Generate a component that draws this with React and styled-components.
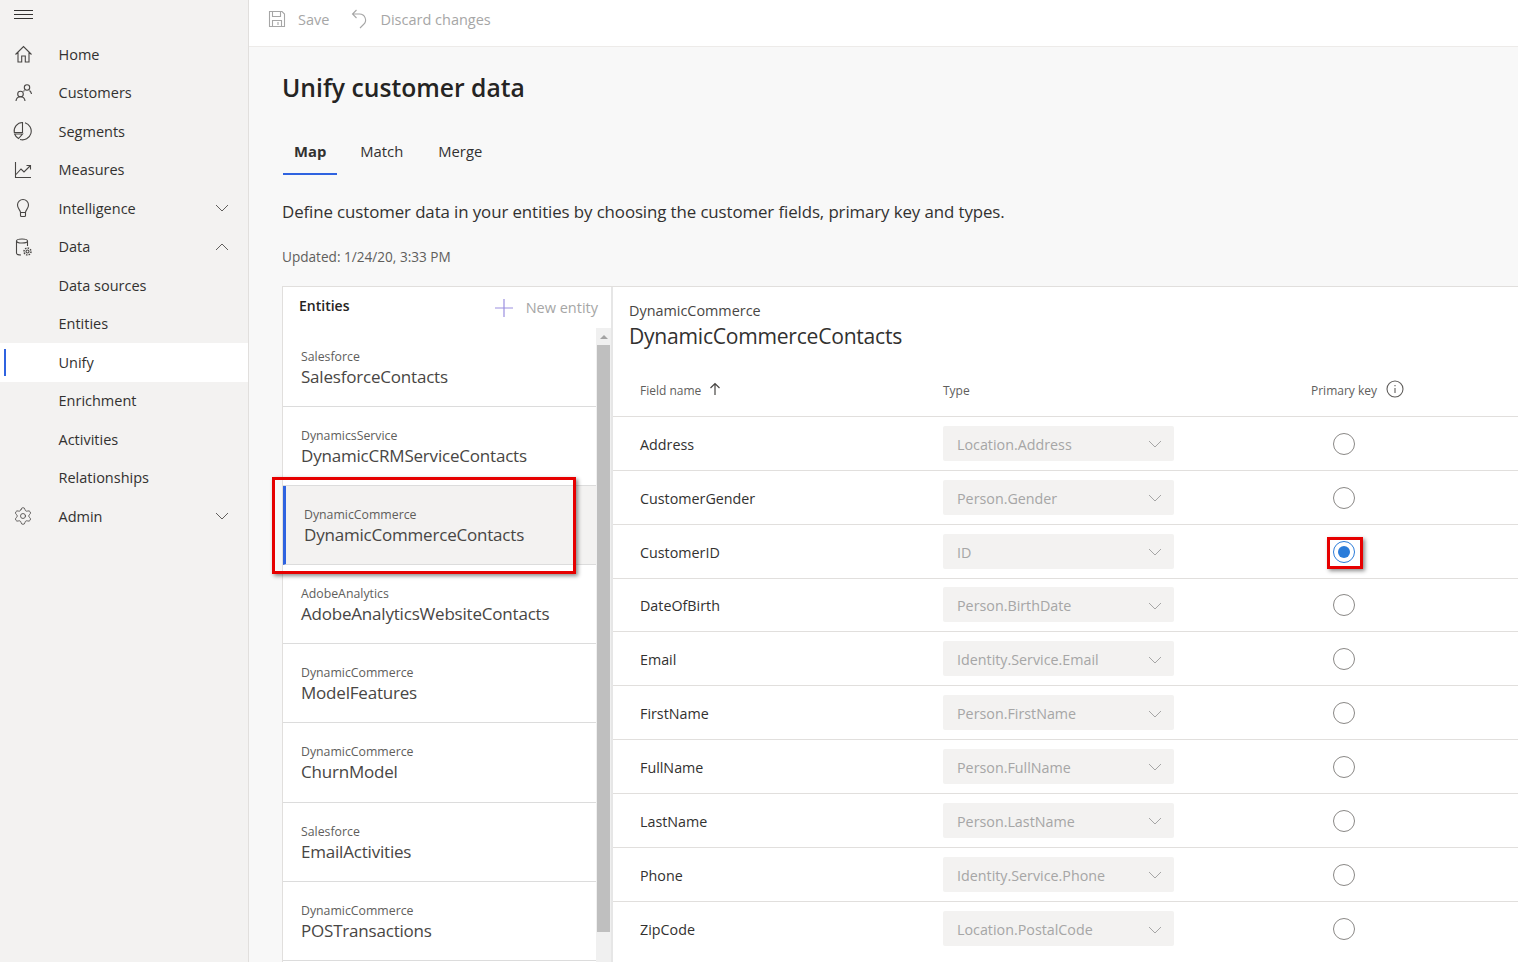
import React from "react";
import styled, { createGlobalStyle } from "styled-components";
import { Settings } from "lucide-react";

const GlobalStyle = createGlobalStyle`
  html, body {
    margin: 0;
    height: 100%;
    overflow: hidden;
    font-family: "Open Sans", "Noto Sans", sans-serif;
    color: #323130;
    background: #f8f8f8;
  }
  * { box-sizing: border-box; }
`;

const Page = styled.div`
  display: flex;
  width: 1518px;
  height: 962px;
  overflow: hidden;
`;

const Sidebar = styled.nav`
  width: 249px;
  flex: none;
  background: #f3f2f1;
  border-right: 1px solid #e1dfdd;
`;

const Burger = styled.div`
  height: 35px;
  display: flex;
  align-items: flex-start;
  padding: 9px 0 0 14px;
  color: #323130;
`;

const NavRow = styled.div`
  position: relative;
  height: 38.5px;
  display: flex;
  align-items: center;
  font-size: 14.5px;
  background: ${(p) => (p.$active ? "#fff" : "transparent")};
  &::before {
    content: "";
    display: ${(p) => (p.$active ? "block" : "none")};
    position: absolute;
    left: 4px;
    top: 6px;
    bottom: 6px;
    width: 2px;
    background: #2f63e0;
  }
`;

const NavIcon = styled.span`
  width: 58.5px;
  flex: none;
  padding-left: 13px;
  display: flex;
  align-items: center;
  color: #484644;
`;

const NavLabel = styled.span`
  flex: 1;
`;

const NavChevron = styled.span`
  width: 33px;
  flex: none;
  display: flex;
  color: #605e5c;
`;

const Main = styled.main`
  flex: 1;
  min-width: 0;
`;

const Toolbar = styled.div`
  height: 47px;
  background: #fff;
  border-bottom: 1px solid #edebe9;
  display: flex;
  align-items: center;
  padding: 0 0 8px 19px;
  font-size: 14.5px;
  color: #a6a6a6;
`;

const ToolButton = styled.span`
  display: flex;
  align-items: center;
  gap: 12px;
  margin-right: 21px;
`;

const Content = styled.div`
  padding: 23px 0 0 33px;
`;

const Title = styled.h1`
  margin: 0;
  font-size: 24.7px;
  line-height: 36px;
  font-weight: 600;
  color: #252423;
`;

const Tabs = styled.div`
  display: flex;
  gap: 11px;
  margin-top: 31px;
  padding-left: 1px;
`;

const Tab = styled.div`
  height: 38px;
  padding: 0 ${(p) => (p.$active ? 11 : 12)}px;
  font-size: 14.8px;
  line-height: 28px;
  font-weight: ${(p) => (p.$active ? 700 : 400)};
  border-bottom: 2px solid ${(p) => (p.$active ? "#2f63e0" : "transparent")};
`;

const Description = styled.p`
  margin: 24px 0 0;
  font-size: 16.87px;
  line-height: 25px;
  color: #323130;
  letter-spacing: -0.1px;
`;

const Updated = styled.p`
  margin: 23px 0 0;
  font-size: 13.6px;
  line-height: 20px;
  color: #605e5c;
`;

const Panel = styled.div`
  display: flex;
  margin-top: 19px;
  height: 700px;
  background: #fff;
  border-top: 1px solid #e1dfdd;
  border-left: 1px solid #e1dfdd;
`;

const EntityColumn = styled.section`
  width: 330px;
  flex: none;
  border-right: 2px solid #e6e6e6;
`;

const EntityHeader = styled.div`
  height: 41px;
  display: flex;
  justify-content: space-between;
  padding: 0 13px 0 16px;
`;

const EntityHeading = styled.span`
  font-size: 14px;
  font-weight: 600;
  line-height: 38px;
  color: #252423;
`;

const NewEntity = styled.span`
  display: flex;
  align-items: center;
  gap: 12px;
  font-size: 14.5px;
  color: #a6a6a6;
  height: 41px;
`;

const EntityBody = styled.div`
  display: flex;
`;

const EntityList = styled.div`
  width: 313px;
  flex: none;
`;

const EntityItem = styled.div`
  position: relative;
  height: 79.1px;
  padding: 21px 0 0 18px;
  border-bottom: 1px solid #dcdcdc;
  background: ${(p) => (p.$active ? "#f3f2f1" : "#fff")};
  border-left: ${(p) => (p.$active ? "3px solid #2f63e0" : "0")};
`;

const EntitySource = styled.div`
  font-size: 12.3px;
  line-height: 16px;
  color: #605e5c;
`;

const EntityName = styled.div`
  font-size: 17px;
  line-height: 24px;
  color: #484644;
  letter-spacing: -0.2px;
`;

const Highlight = styled.div`
  position: absolute;
  z-index: 2;
  border: 3px solid #e60000;
  box-shadow: 2px 2px 4px rgba(0, 0, 0, 0.45);
  pointer-events: none;
`;

const EntityHighlight = styled(Highlight)`
  left: -14px;
  top: -9px;
  width: 304px;
  height: 97px;
`;

const Scrollbar = styled.div`
  width: 15px;
  flex: none;
  background: #f0f0f0;
  padding-left: 1px;
  height: 640px;
`;

const ScrollArrow = styled.div`
  height: 17px;
  display: flex;
  justify-content: center;
  align-items: center;
  &::after {
    content: "";
    border: 4px solid transparent;
    border-top: 0;
    border-bottom: 4px solid #a3a3a3;
  }
`;

const ScrollThumb = styled.div`
  width: 13px;
  height: 587px;
  background: #bfbfbf;
`;

const Detail = styled.section`
  flex: 1;
  min-width: 0;
`;

const DetailHead = styled.div`
  padding: 14px 0 0 16px;
  height: 74px;
`;

const DetailSource = styled.div`
  font-size: 14.4px;
  line-height: 20px;
  color: #484644;
`;

const DetailName = styled.div`
  font-size: 21.1px;
  line-height: 29px;
  color: #323130;
  letter-spacing: -0.25px;
`;

const gridColumns = "303px 368px 1fr";

const HeadRow = styled.div`
  display: grid;
  grid-template-columns: ${gridColumns};
  height: 56px;
  padding: 4px 0 0 27px;
  align-items: center;
  border-bottom: 1px solid #e1dfdd;
  font-size: 12px;
  color: #605e5c;
`;

const HeadCell = styled.span`
  display: flex;
  align-items: center;
  gap: ${(p) => p.$gap || 0}px;
  height: 30px;
  svg {
    margin-top: -4px;
  }
`;

const Row = styled.div`
  display: grid;
  grid-template-columns: ${gridColumns};
  height: 53.85px;
  padding-left: 27px;
  align-items: center;
  border-bottom: 1px solid #e1dfdd;
  font-size: 14.3px;
  color: #323130;
  &:last-child {
    border-bottom: 0;
  }
`;

const FieldName = styled.span`
  padding-top: 2px;
`;

const TypeSelect = styled.div`
  width: 231px;
  height: 35px;
  padding: 2px 12px 0 14px;
  display: flex;
  align-items: center;
  justify-content: space-between;
  background: #f3f2f1;
  border-radius: 2px;
  color: #a6a6a6;
`;

const RadioCell = styled.div`
  position: relative;
  width: 22px;
  height: 22px;
  margin: 1px 0 0 22px;
`;

const Radio = styled.div`
  width: 22px;
  height: 22px;
  border-radius: 50%;
  border: 1px solid ${(p) => (p.$on ? "#2b7cd9" : "#8a8886")};
  background: #fff;
  display: flex;
  align-items: center;
  justify-content: center;
  &::after {
    content: "";
    display: ${(p) => (p.$on ? "block" : "none")};
    width: 12px;
    height: 12px;
    border-radius: 50%;
    background: #2b7cd9;
  }
`;

const RadioHighlight = styled(Highlight)`
  left: -6px;
  top: -4px;
  width: 36px;
  height: 32px;
`;

const Line = ({ size = 20, children, sw = 1.1 }) => (
  <svg width={size} height={size} viewBox="0 0 20 20" fill="none" stroke="currentColor" strokeWidth={sw}>
    {children}
  </svg>
);

const icons = {
  home: (
    <Line>
      <path d="M2.5 10.5 10.5 2.5l8 8M5 8.5V18h3.7v-6h3.6v6H16V8.5" />
    </Line>
  ),
  customers: (
    <Line>
      <circle cx="14" cy="4.500" r="2.700" />
      <path d="M16.500 7.500c1 .8 1.800 2 2 3.500M10.500 8.500c.3-.4.700-.8 1-1" />
      <circle cx="7.500" cy="11" r="2.800" />
      <path d="M3 18c.2-2.800 2-4.300 4.500-4.300S11.800 15.200 12 18" />
    </Line>
  ),
  segments: (
    <Line>
      <path d="M12 1.800A8.500 8.500 0 1 1 7 18.500" />
      <path d="M9.500 1.500A8.500 8.500 0 0 0 1.300 11.500H9.500zM1.600 13H9.500L5.500 17.500A8.500 8.500 0 0 1 1.600 13z" />
    </Line>
  ),
  measures: (
    <Line>
      <path d="M2.500 2v15.500H18" />
      <path d="M3 14.500 8 9l3 3 6-6M13.500 5.500h4v4" />
    </Line>
  ),
  intelligence: (
    <Line>
      <path d="M7.500 14.500c0-2.500-3-3.500-3-7.500a5.500 5.500 0 0 1 11 0c0 4-3 5-3 7.500zM7.500 14.500V17.500a1 1 0 0 0 1 1h3a1 1 0 0 0 1-1v-3" />
    </Line>
  ),
  data: (
    <Line>
      <ellipse cx="9" cy="4" rx="5.500" ry="2" />
      <path d="M3.500 4v12c0 1.200 2 2 4.500 2M14.500 4v5" />
      <circle cx="14.500" cy="14.500" r="1.500" />
      <circle cx="14.500" cy="14.500" r="3.500" strokeDasharray="1.500 1.200" strokeWidth="1.500" />
    </Line>
  ),
  admin: <Settings size={20} strokeWidth={1} />,
};

const Chevron = ({ up, size = 14 }) => (
  <svg width={size} height={size} viewBox="0 0 14 14" fill="none" stroke="currentColor" strokeWidth="1">
    <path d={up ? "M1 10l6-6 6 6" : "M1 4l6 6 6-6"} />
  </svg>
);

const navItems = [
  { label: "Home", icon: "home" },
  { label: "Customers", icon: "customers" },
  { label: "Segments", icon: "segments" },
  { label: "Measures", icon: "measures" },
  { label: "Intelligence", icon: "intelligence", chevron: "down" },
  { label: "Data", icon: "data", chevron: "up" },
  { label: "Data sources" },
  { label: "Entities" },
  { label: "Unify", active: true },
  { label: "Enrichment" },
  { label: "Activities" },
  { label: "Relationships" },
  { label: "Admin", icon: "admin", chevron: "down" },
];

const entities = [
  ["Salesforce", "SalesforceContacts"],
  ["DynamicsService", "DynamicCRMServiceContacts"],
  ["DynamicCommerce", "DynamicCommerceContacts", true],
  ["AdobeAnalytics", "AdobeAnalyticsWebsiteContacts"],
  ["DynamicCommerce", "ModelFeatures"],
  ["DynamicCommerce", "ChurnModel"],
  ["Salesforce", "EmailActivities"],
  ["DynamicCommerce", "POSTransactions"],
];

const fields = [
  ["Address", "Location.Address"],
  ["CustomerGender", "Person.Gender"],
  ["CustomerID", "ID", true],
  ["DateOfBirth", "Person.BirthDate"],
  ["Email", "Identity.Service.Email"],
  ["FirstName", "Person.FirstName"],
  ["FullName", "Person.FullName"],
  ["LastName", "Person.LastName"],
  ["Phone", "Identity.Service.Phone"],
  ["ZipCode", "Location.PostalCode"],
];

export default function App() {
  return (
    <>
      <GlobalStyle />
      <Page>
        <Sidebar>
          <Burger>
            <svg width="20" height="12" viewBox="0 0 20 12" stroke="currentColor" strokeWidth="1">
              <path d="M0 1.500h19M0 5.500h19M0 9.500h19" />
            </svg>
          </Burger>
          {navItems.map((item) => (
            <NavRow key={item.label} $active={item.active}>
              <NavIcon>{item.icon && icons[item.icon]}</NavIcon>
              <NavLabel>{item.label}</NavLabel>
              {item.chevron && (
                <NavChevron>
                  <Chevron up={item.chevron === "up"} />
                </NavChevron>
              )}
            </NavRow>
          ))}
        </Sidebar>
        <Main>
          <Toolbar>
            <ToolButton>
              <svg width="18" height="18" viewBox="0 0 18 18" fill="none" stroke="#a6a6a6" strokeWidth="1.100">
                <path d="M1.500 1.500h12.500l2.500 2.500v12.500h-15zM4.500 1.500v5h8v-5M4.500 16.500v-6h9v6M10 12v3" />
              </svg>
              Save
            </ToolButton>
            <ToolButton>
              <svg width="18" height="20" viewBox="0 0 18 20" fill="none" stroke="#a6a6a6" strokeWidth="1.100">
                <path d="M6.500 1 2.500 5l4 4M2.500 5h7a6 6 0 0 1 4 10.500L10 19" />
              </svg>
              Discard changes
            </ToolButton>
          </Toolbar>
          <Content>
            <Title>Unify customer data</Title>
            <Tabs>
              <Tab $active>Map</Tab>
              <Tab>Match</Tab>
              <Tab>Merge</Tab>
            </Tabs>
            <Description>
              Define customer data in your entities by choosing the customer fields, primary key and types.
            </Description>
            <Updated>Updated: 1/24/20, 3:33 PM</Updated>
            <Panel>
              <EntityColumn>
                <EntityHeader>
                  <EntityHeading>Entities</EntityHeading>
                  <NewEntity>
                    <svg width="20" height="20" viewBox="0 0 20 20" stroke="#9b8fe0" strokeWidth="1.200">
                      <path d="M10 1v18M1 10h18" />
                    </svg>
                    New entity
                  </NewEntity>
                </EntityHeader>
                <EntityBody>
                  <EntityList>
                    {entities.map(([source, name, active]) => (
                      <EntityItem key={name} $active={active}>
                        <EntitySource>{source}</EntitySource>
                        <EntityName>{name}</EntityName>
                        {active && <EntityHighlight />}
                      </EntityItem>
                    ))}
                  </EntityList>
                  <Scrollbar>
                    <ScrollArrow />
                    <ScrollThumb />
                  </Scrollbar>
                </EntityBody>
              </EntityColumn>
              <Detail>
                <DetailHead>
                  <DetailSource>DynamicCommerce</DetailSource>
                  <DetailName>DynamicCommerceContacts</DetailName>
                </DetailHead>
                <HeadRow>
                  <HeadCell $gap={8}>
                    Field name
                    <svg width="12" height="14" viewBox="0 0 12 14" fill="none" stroke="#484644" strokeWidth="1.200">
                      <path d="M6 13V1.500M1.500 6 6 1.500 10.500 6" />
                    </svg>
                  </HeadCell>
                  <HeadCell>Type</HeadCell>
                  <HeadCell $gap={9}>
                    Primary key
                    <svg width="18" height="18" viewBox="0 0 18 18" fill="none" stroke="#605e5c" strokeWidth="1.100">
                      <circle cx="9" cy="9" r="8" />
                      <path d="M9 8v5M9 5v1.300" />
                    </svg>
                  </HeadCell>
                </HeadRow>
                {fields.map(([field, type, on]) => (
                  <Row key={field}>
                    <FieldName>{field}</FieldName>
                    <TypeSelect>
                      {type}
                      <Chevron />
                    </TypeSelect>
                    <RadioCell>
                      <Radio $on={on} />
                      {on && <RadioHighlight />}
                    </RadioCell>
                  </Row>
                ))}
              </Detail>
            </Panel>
          </Content>
        </Main>
      </Page>
    </>
  );
}
